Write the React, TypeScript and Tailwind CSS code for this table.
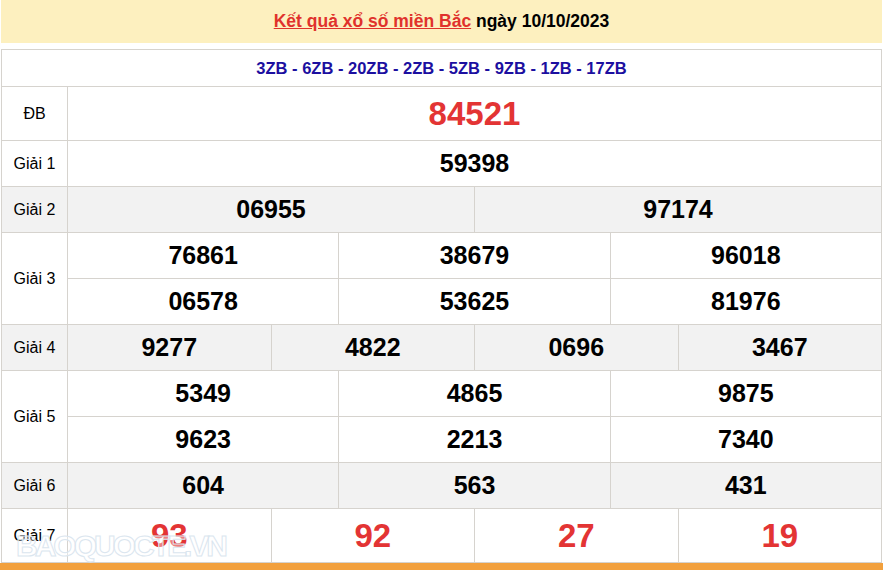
import React from 'react';

const BORDER = 'border-[#d6d3ce]';

type RowProps = {
  label: string;
  lines: string[][];
  grey?: boolean;
  red?: boolean;
  height?: string;
  big?: boolean;
};

function Row({ label, lines, grey = false, red = false, height = 'h-[45px]', big = false }: RowProps) {
  return (
    <div className={`flex border-b ${BORDER} ${grey ? 'bg-[#f2f2f2]' : 'bg-white'}`}>
      <div className={`w-[66px] shrink-0 border-r ${BORDER} flex items-center justify-center text-[16px] text-black`}>
        {label}
      </div>
      <div className="flex-1 flex flex-col">
        {lines.map((cells, i) => (
          <div
            key={i}
            className={`flex box-content ${height} ${i < lines.length - 1 ? `border-b ${BORDER}` : ''}`}
          >
            {cells.map((n, j) => (
              <div
                key={j}
                className={`flex-1 basis-0 flex items-center justify-center font-bold ${
                  j > 0 ? `border-l ${BORDER}` : ''
                } ${red ? 'text-[#e33434]' : 'text-black'} ${big ? 'text-[33px]' : 'text-[25px]'}`}
              >
                {n}
              </div>
            ))}
          </div>
        ))}
      </div>
    </div>
  );
}

export default function App() {
  return (
    <div
      className="relative w-[883px] h-[570px] overflow-hidden bg-white"
      style={{ fontFamily: '"Liberation Sans", Arial, sans-serif' }}
    >
      {/* title bar */}
      <div className="mx-[1px] h-[43px] bg-[#fdf0bf] flex items-center justify-center text-[17.5px] font-bold">
        <span className="text-[#e0322c] underline">Kết quả xổ số miền Bắc</span>
        <span className="text-black">&nbsp;ngày 10/10/2023</span>
      </div>

      {/* results table */}
      <div className={`mt-[6px] mx-[1px] border-l border-r border-t ${BORDER}`}>
        <div className={`h-[37px] border-b ${BORDER} flex items-center justify-center text-[16.5px] font-bold text-[#1c0fa0]`}>
          3ZB - 6ZB - 20ZB - 2ZB - 5ZB - 9ZB - 1ZB - 17ZB
        </div>
        <Row label="ĐB" lines={[['84521']]} red big height="h-[53px]" />
        <Row label="Giải 1" lines={[['59398']]} />
        <Row label="Giải 2" lines={[['06955', '97174']]} grey />
        <Row
          label="Giải 3"
          lines={[
            ['76861', '38679', '96018'],
            ['06578', '53625', '81976'],
          ]}
        />
        <Row label="Giải 4" lines={[['9277', '4822', '0696', '3467']]} grey />
        <Row
          label="Giải 5"
          lines={[
            ['5349', '4865', '9875'],
            ['9623', '2213', '7340'],
          ]}
        />
        <Row label="Giải 6" lines={[['604', '563', '431']]} grey />
        <Row label="Giải 7" lines={[['93', '92', '27', '19']]} red big height="h-[53px]" />
      </div>

      {/* orange footer strip */}
      <div className="absolute left-0 right-0 bottom-0 h-[7px] bg-[#f2a03d]" />

      {/* watermark */}
      <div className="absolute left-[16px] top-[531px] text-[30px] leading-none font-bold tracking-[-3px] text-white/40 [-webkit-text-stroke:1px_#dbe6ef] select-none">
        BAOQUOCTE.VN
      </div>
    </div>
  );
}
